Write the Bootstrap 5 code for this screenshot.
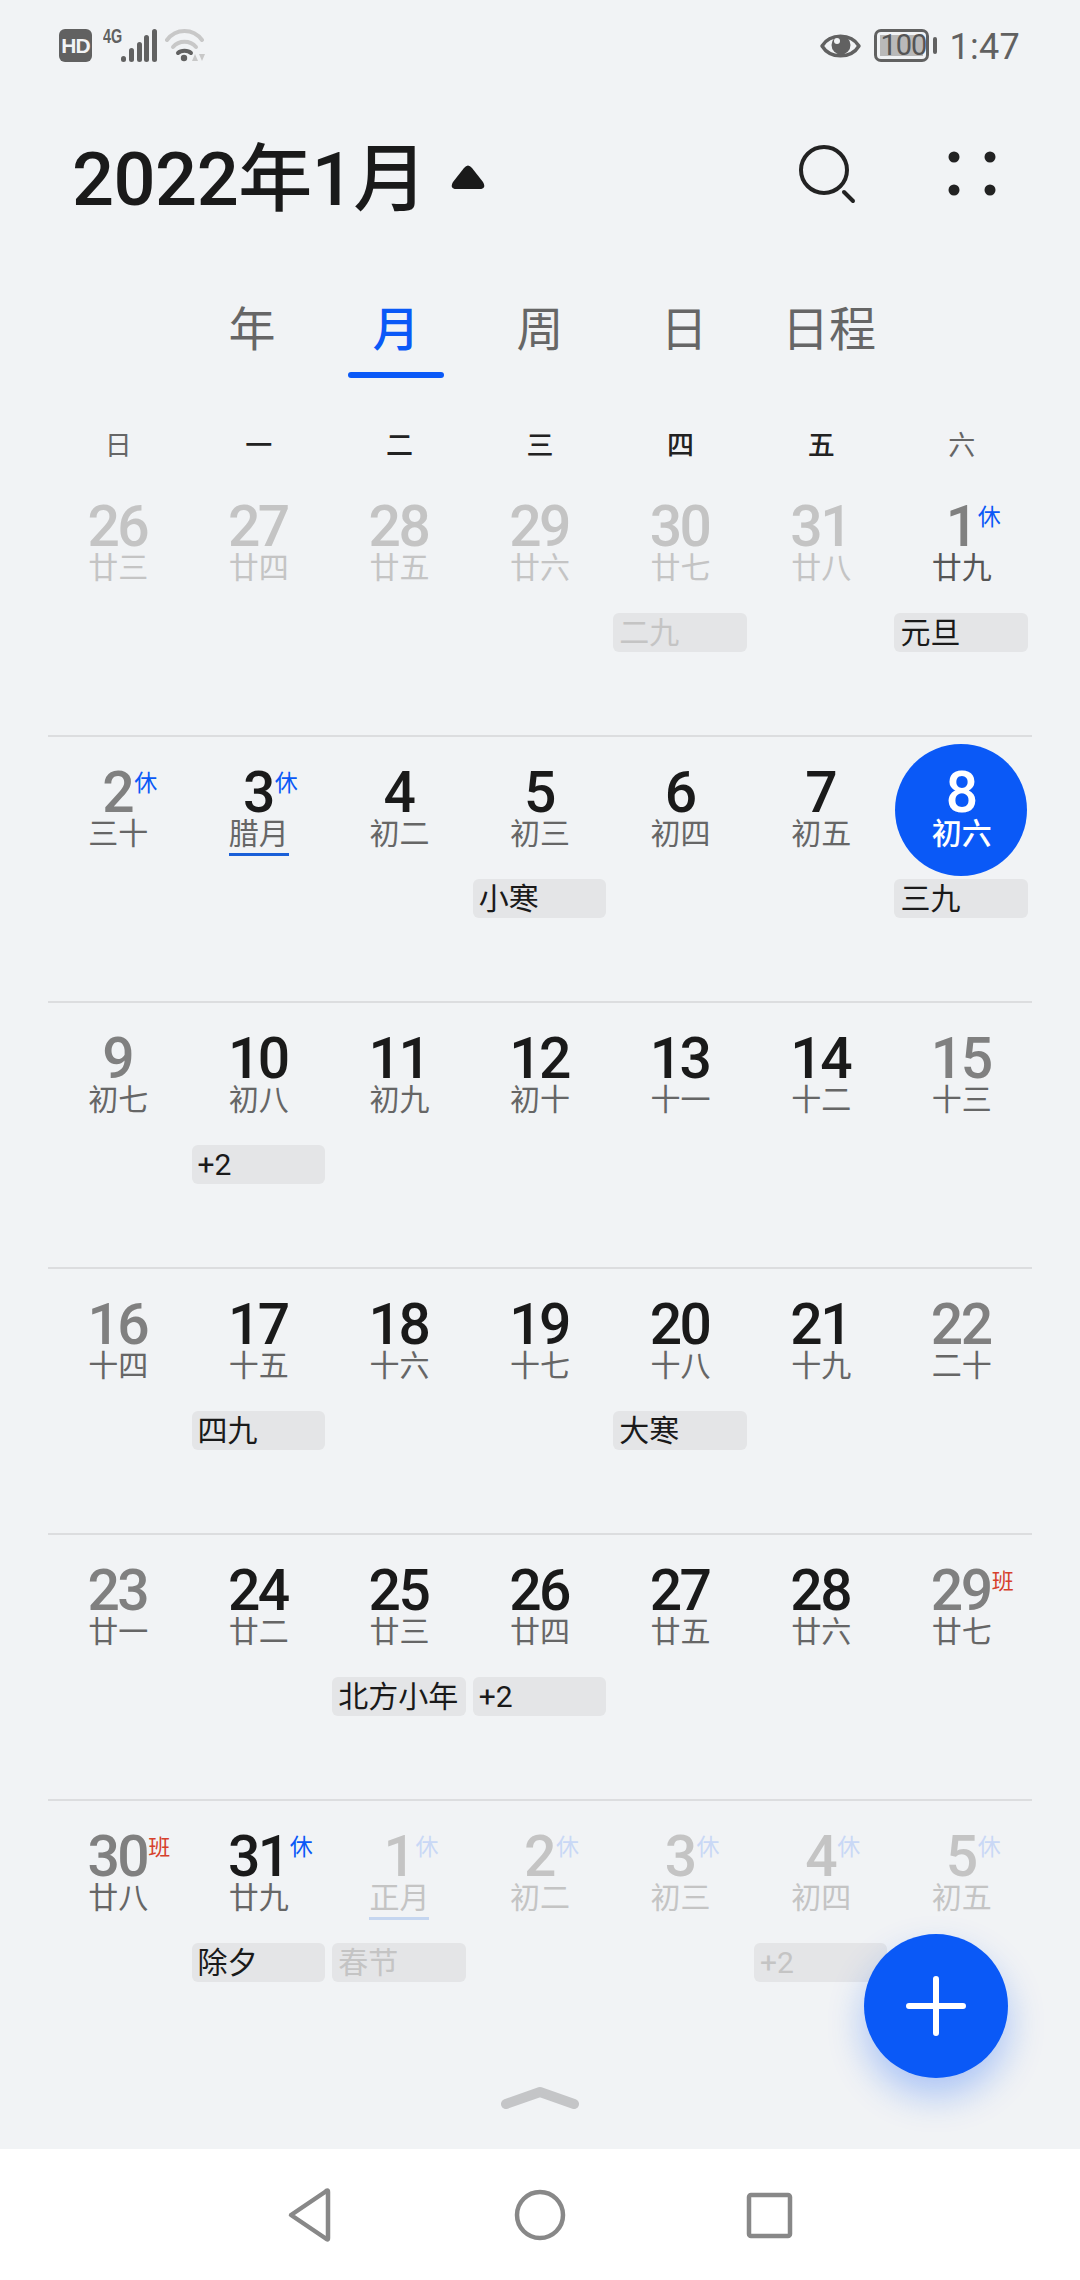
<!doctype html>
<html lang="zh-CN">
<head>
    <meta charset="utf-8">
    <meta name="viewport" content="width=device-width, initial-scale=1">
    <link href="https://cdn.jsdelivr.net/npm/bootstrap@5.3.3/dist/css/bootstrap.min.css" rel="stylesheet">
    <title>日历</title>
    <style>
        body { width: 1080px; height: 2280px; overflow: hidden; background: #f1f3f5; font-family: "Roboto", "Noto Sans CJK SC", sans-serif; color: #1a1a1a; }
        .page { height: 2280px; }

        .status-bar { height: 90px; padding: 29px 60px 0 59px; color: #616161; }
        .hd-tag { width: 33px; height: 33px; border-radius: 6px; background: #616161; color: #f1f3f5; font: 700 21px/33px "Liberation Sans", sans-serif; letter-spacing: -1px; text-align: center; }
        .net-tag { font: 700 20px/15px "Liberation Sans", sans-serif; margin-left: 11px; width: 18px; align-self: flex-start; transform: scaleX(.72); transform-origin: left; }
        .batt { width: 55px; height: 33px; border: 3px solid #616161; border-radius: 7px; padding: 3px; margin: 0 4px 0 13px; }
        .batt-fill { height: 21px; background: #b9b9b9; font: 400 29px/21px "Roboto", sans-serif; letter-spacing: -1px; color: #555; text-align: center; }
        .batt-cap { width: 4px; height: 17px; border-radius: 2px; background: #616161; }
        .clock { font: 400 36px/33px "Roboto", sans-serif; margin: 2px 0 0 12px; letter-spacing: .3px; }

        .head-row { height: 178px; padding: 0 0 0 72px; }
        .head-title { font-size: 74px; line-height: 90px; font-weight: 500; letter-spacing: -.5px; padding-top: 2px; }
        .head-arrow { margin: 0 0 3px 24px; }
        .head-tools { width: 281px; }
        .dots-icon { margin-left: 89px; }

        .tab-row { height: 161px; padding: 0 0 0 204px; gap: 48px; align-items: flex-start; }
        .tab-item { width: 96px; height: 110px; padding-top: 34px; text-align: center; font-size: 47px; line-height: 56px; color: #666; position: relative; }
        .tab-item.on { color: #0a59f7; font-weight: 500; }
        .tab-item.on::after { content: ""; position: absolute; left: 0; right: 0; top: 104px; height: 6px; border-radius: 3px; background: #0a59f7; }
        .tab-wide { width: 98px; }

        .cal { padding: 0 48px; }
        .week-row { height: 40px; font-size: 27px; line-height: 34px; font-weight: 500; text-align: center; color: #222; }
        .week-off { color: #666; font-weight: 400; }

        .cal-row { height: 266px; text-align: center; }
        .cal-row + .cal-row { border-top: 2px solid #dcdddf; }
        .cal-cell { position: relative; min-width: 0; }
        .cal-row + .cal-row .cal-cell { margin-top: -2px; }
        .day-wrap { height: 82px; padding-top: 33px; }
        .day-num { position: relative; margin-left: -2px; font-size: 57px; line-height: 49px; font-weight: 500; letter-spacing: -2.5px; color: #1a1a1a; }
        .lunar-line { height: 39px; }
        .lunar { display: inline-block; height: 39px; font-size: 30px; line-height: 34px; color: #666; padding-bottom: 2px; border-bottom: 3px solid transparent; }
        .off-tag { position: absolute; left: 100%; top: 3px; margin-left: 2px; font-size: 23px; line-height: 26px; font-weight: 400; letter-spacing: 0; color: #0a59f7; white-space: nowrap; }
        .off-tag.work { color: #d6402c; margin-left: 1px; font-size: 22px; }
        .ev-chip { height: 39px; margin: 23px 4px 0 3px; padding-left: 6px; border-radius: 6px; background: #e4e5e7; font-size: 30px; line-height: 39px; text-align: left; color: #1a1a1a; white-space: nowrap; overflow: hidden; }

        .is-rest .day-num { color: #808080; }
        .is-dim .day-num, .is-dim .lunar, .is-dim .ev-chip { color: #c4c4c4; }
        .is-dim .off-tag { color: #c9d8f5; }
        .lunar.lunar-strong { color: #555; }
        .lunar.month-mark { border-bottom-color: #1a5fd8; }
        .is-dim .lunar.month-mark { border-bottom-color: #c5d6f0; }

        .is-today::before { content: ""; position: absolute; left: 50%; top: 9px; width: 132px; height: 132px; margin-left: -67px; border-radius: 50%; background: #0a59f7; }
        .is-today .day-num, .is-today .lunar { color: #fff; }
        .is-today .lunar { font-weight: 500; position: relative; }

        .handle-row { flex: 1 1 auto; padding-top: 21px; }
        .nav-bar { height: 131px; background: #fff; }

        .fab-add { position: absolute; left: 864px; top: 1934px; width: 144px; height: 144px; border-radius: 50%; background: #0a59f7; box-shadow: 0 18px 36px rgba(10, 89, 247, .3); border: 0; padding: 0; }
    </style>
</head>
<body>
    <div class="page d-flex flex-column position-relative">
        <!-- barra de estado -->
        <div class="status-bar d-flex justify-content-between">
            <div class="d-flex align-items-start">
                <div class="hd-tag">HD</div>
                <div class="net-tag">4G</div>
                <svg width="36" height="33" viewBox="0 0 36 33" fill="#616161">
                    <rect x="0" y="27" width="5" height="6" rx="2.5"/>
                    <rect x="8" y="19" width="5" height="14" rx="2.5"/>
                    <rect x="16" y="13" width="5" height="20" rx="2.5"/>
                    <rect x="23" y="6" width="5" height="27" rx="2.5"/>
                    <rect x="31" y="0" width="5" height="33" rx="2.5"/>
                </svg>
                <svg class="ms-2" width="40" height="33" viewBox="0 0 40 33" fill="none">
                    <path d="M2 11 C11 -1 28 -1 37 11" stroke="#c8c8c8" stroke-width="4" stroke-linecap="round"/>
                    <path d="M8 18 C14 11 25 11 31 18" stroke="#c8c8c8" stroke-width="4" stroke-linecap="round"/>
                    <path d="M13 24 C16 21 23 21 26 24" stroke="#616161" stroke-width="4" stroke-linecap="round"/>
                    <circle cx="19" cy="29" r="3.2" fill="#616161"/>
                    <path d="M30 25 L33 32 H27 Z M34 25 H40 L37 32 Z" fill="#c8c8c8"/>
                </svg>
            </div>
            <div class="d-flex align-items-start">
                <svg width="41" height="33" viewBox="0 0 41 33" fill="none">
                    <path d="M2 17 C10 4 31 4 39 17 C31 30 10 30 2 17 Z" stroke="#616161" stroke-width="3.4" stroke-linejoin="round"/>
                    <circle cx="21" cy="16" r="9.5" fill="#616161"/>
                    <circle cx="17" cy="12" r="3" fill="#f1f3f5"/>
                </svg>
                <div class="batt"><div class="batt-fill">100</div></div>
                <div class="batt-cap mt-2"></div>
                <div class="clock">1:47</div>
            </div>
        </div>

        <!-- cabecera -->
        <div class="head-row d-flex align-items-center justify-content-between">
            <div class="d-flex align-items-center">
                <div class="head-title">2022年1月</div>
                <svg class="head-arrow" width="34" height="25" viewBox="0 0 34 25"><path d="M13 3 Q17 -2 21 3 L32 17 Q36 24 28 24 H6 Q-2 24 2 17 Z" fill="#1a1a1a"/></svg>
            </div>
            <div class="head-tools d-flex">
                <svg width="60" height="68" viewBox="0 0 60 68" fill="none" stroke="#222" stroke-linecap="round">
                    <circle cx="25" cy="25" r="23" stroke-width="4"/>
                    <path d="M45 47 L54 56" stroke-width="4"/>
                </svg>
                <svg class="dots-icon" width="56" height="68" viewBox="0 0 56 68" fill="#222">
                    <circle cx="6" cy="12" r="5.5"/><circle cx="42" cy="12" r="5.5"/>
                    <circle cx="6" cy="45" r="5.5"/><circle cx="42" cy="45" r="5.5"/>
                </svg>
            </div>
        </div>

        <!-- pestañas -->
        <div class="tab-row d-flex">
            <div class="tab-item">年</div>
            <div class="tab-item on">月</div>
            <div class="tab-item">周</div>
            <div class="tab-item">日</div>
            <div class="tab-item tab-wide">日程</div>
        </div>

        <!-- calendario -->
        <div class="cal">
            <div class="row g-0 week-row">
                <div class="col week-off">日</div>
                <div class="col">一</div>
                <div class="col">二</div>
                <div class="col">三</div>
                <div class="col">四</div>
                <div class="col">五</div>
                <div class="col week-off">六</div>
            </div>
            <div id="calBody"></div>
        </div>

        <div class="handle-row d-flex justify-content-center">
            <svg width="78" height="24" viewBox="0 0 78 24" fill="none"><path d="M5 18 L39 6 L73 18" stroke="#c4c5c7" stroke-width="10" stroke-linecap="round" stroke-linejoin="round"/></svg>
        </div>

        <!-- barra de navegación -->
        <div class="nav-bar d-flex justify-content-center">
            <svg width="1080" height="131" viewBox="0 0 1080 131" fill="none" stroke="#888" stroke-width="4.5" stroke-linejoin="round">
                <path d="M328 43 V89 Q328 92 325 89 L291 66 L325 43 Q328 40 328 43 Z"/>
                <circle cx="540" cy="66" r="23"/>
                <rect x="749" y="46" width="41" height="41" rx="2"/>
            </svg>
        </div>

        <button class="fab-add d-flex align-items-center justify-content-center" type="button" aria-label="新建">
            <svg width="60" height="60" viewBox="0 0 60 60" stroke="#fff" stroke-width="6" stroke-linecap="round"><path d="M3 30 H57 M30 3 V57"/></svg>
        </button>
    </div>

    <script src="https://cdn.jsdelivr.net/npm/bootstrap@5.3.3/dist/js/bootstrap.bundle.min.js"></script>
    <script>
        // n: dia, l: lunar, s: estado (dim/rest/today), t: etiqueta, c: evento
        const weeks = [
            [{n:26,l:'廿三',s:'dim'},{n:27,l:'廿四',s:'dim'},{n:28,l:'廿五',s:'dim'},{n:29,l:'廿六',s:'dim'},{n:30,l:'廿七',s:'dim',c:'二九'},{n:31,l:'廿八',s:'dim'},{n:1,l:'廿九',s:'rest',t:'休',c:'元旦',strong:1}],
            [{n:2,l:'三十',s:'rest',t:'休'},{n:3,l:'腊月',t:'休',m:1},{n:4,l:'初二'},{n:5,l:'初三',c:'小寒'},{n:6,l:'初四'},{n:7,l:'初五'},{n:8,l:'初六',s:'today',c:'三九'}],
            [{n:9,l:'初七',s:'rest'},{n:10,l:'初八',c:'+2'},{n:11,l:'初九'},{n:12,l:'初十'},{n:13,l:'十一'},{n:14,l:'十二'},{n:15,l:'十三',s:'rest'}],
            [{n:16,l:'十四',s:'rest'},{n:17,l:'十五',c:'四九'},{n:18,l:'十六'},{n:19,l:'十七'},{n:20,l:'十八',c:'大寒'},{n:21,l:'十九'},{n:22,l:'二十',s:'rest'}],
            [{n:23,l:'廿一',s:'rest'},{n:24,l:'廿二'},{n:25,l:'廿三',c:'北方小年'},{n:26,l:'廿四',c:'+2'},{n:27,l:'廿五'},{n:28,l:'廿六'},{n:29,l:'廿七',s:'rest',t:'班'}],
            [{n:30,l:'廿八',s:'rest',t:'班'},{n:31,l:'廿九',t:'休',c:'除夕'},{n:1,l:'正月',s:'dim',t:'休',c:'春节',m:1},{n:2,l:'初二',s:'dim',t:'休'},{n:3,l:'初三',s:'dim',t:'休'},{n:4,l:'初四',s:'dim',t:'休',c:'+2'},{n:5,l:'初五',s:'dim',t:'休'}]
        ];

        const calBody = document.getElementById('calBody');
        weeks.forEach(week => {
            const row = document.createElement('div');
            row.className = 'row g-0 cal-row';
            week.forEach(d => {
                const tag = d.t ? `<span class="off-tag${d.t === '班' ? ' work' : ''}">${d.t}</span>` : '';
                const chip = d.c ? `<div class="ev-chip">${d.c}</div>` : '';
                row.innerHTML += `
                    <div class="col cal-cell${d.s ? ' is-' + d.s : ''}">
                        <div class="day-wrap d-flex justify-content-center align-items-start"><span class="day-num">${d.n}${tag}</span></div>
                        <div class="lunar-line"><span class="lunar${d.m ? ' month-mark' : ''}${d.strong ? ' lunar-strong' : ''}">${d.l}</span></div>
                        ${chip}
                    </div>`;
            });
            calBody.appendChild(row);
        });
    </script>
</body>
</html>
